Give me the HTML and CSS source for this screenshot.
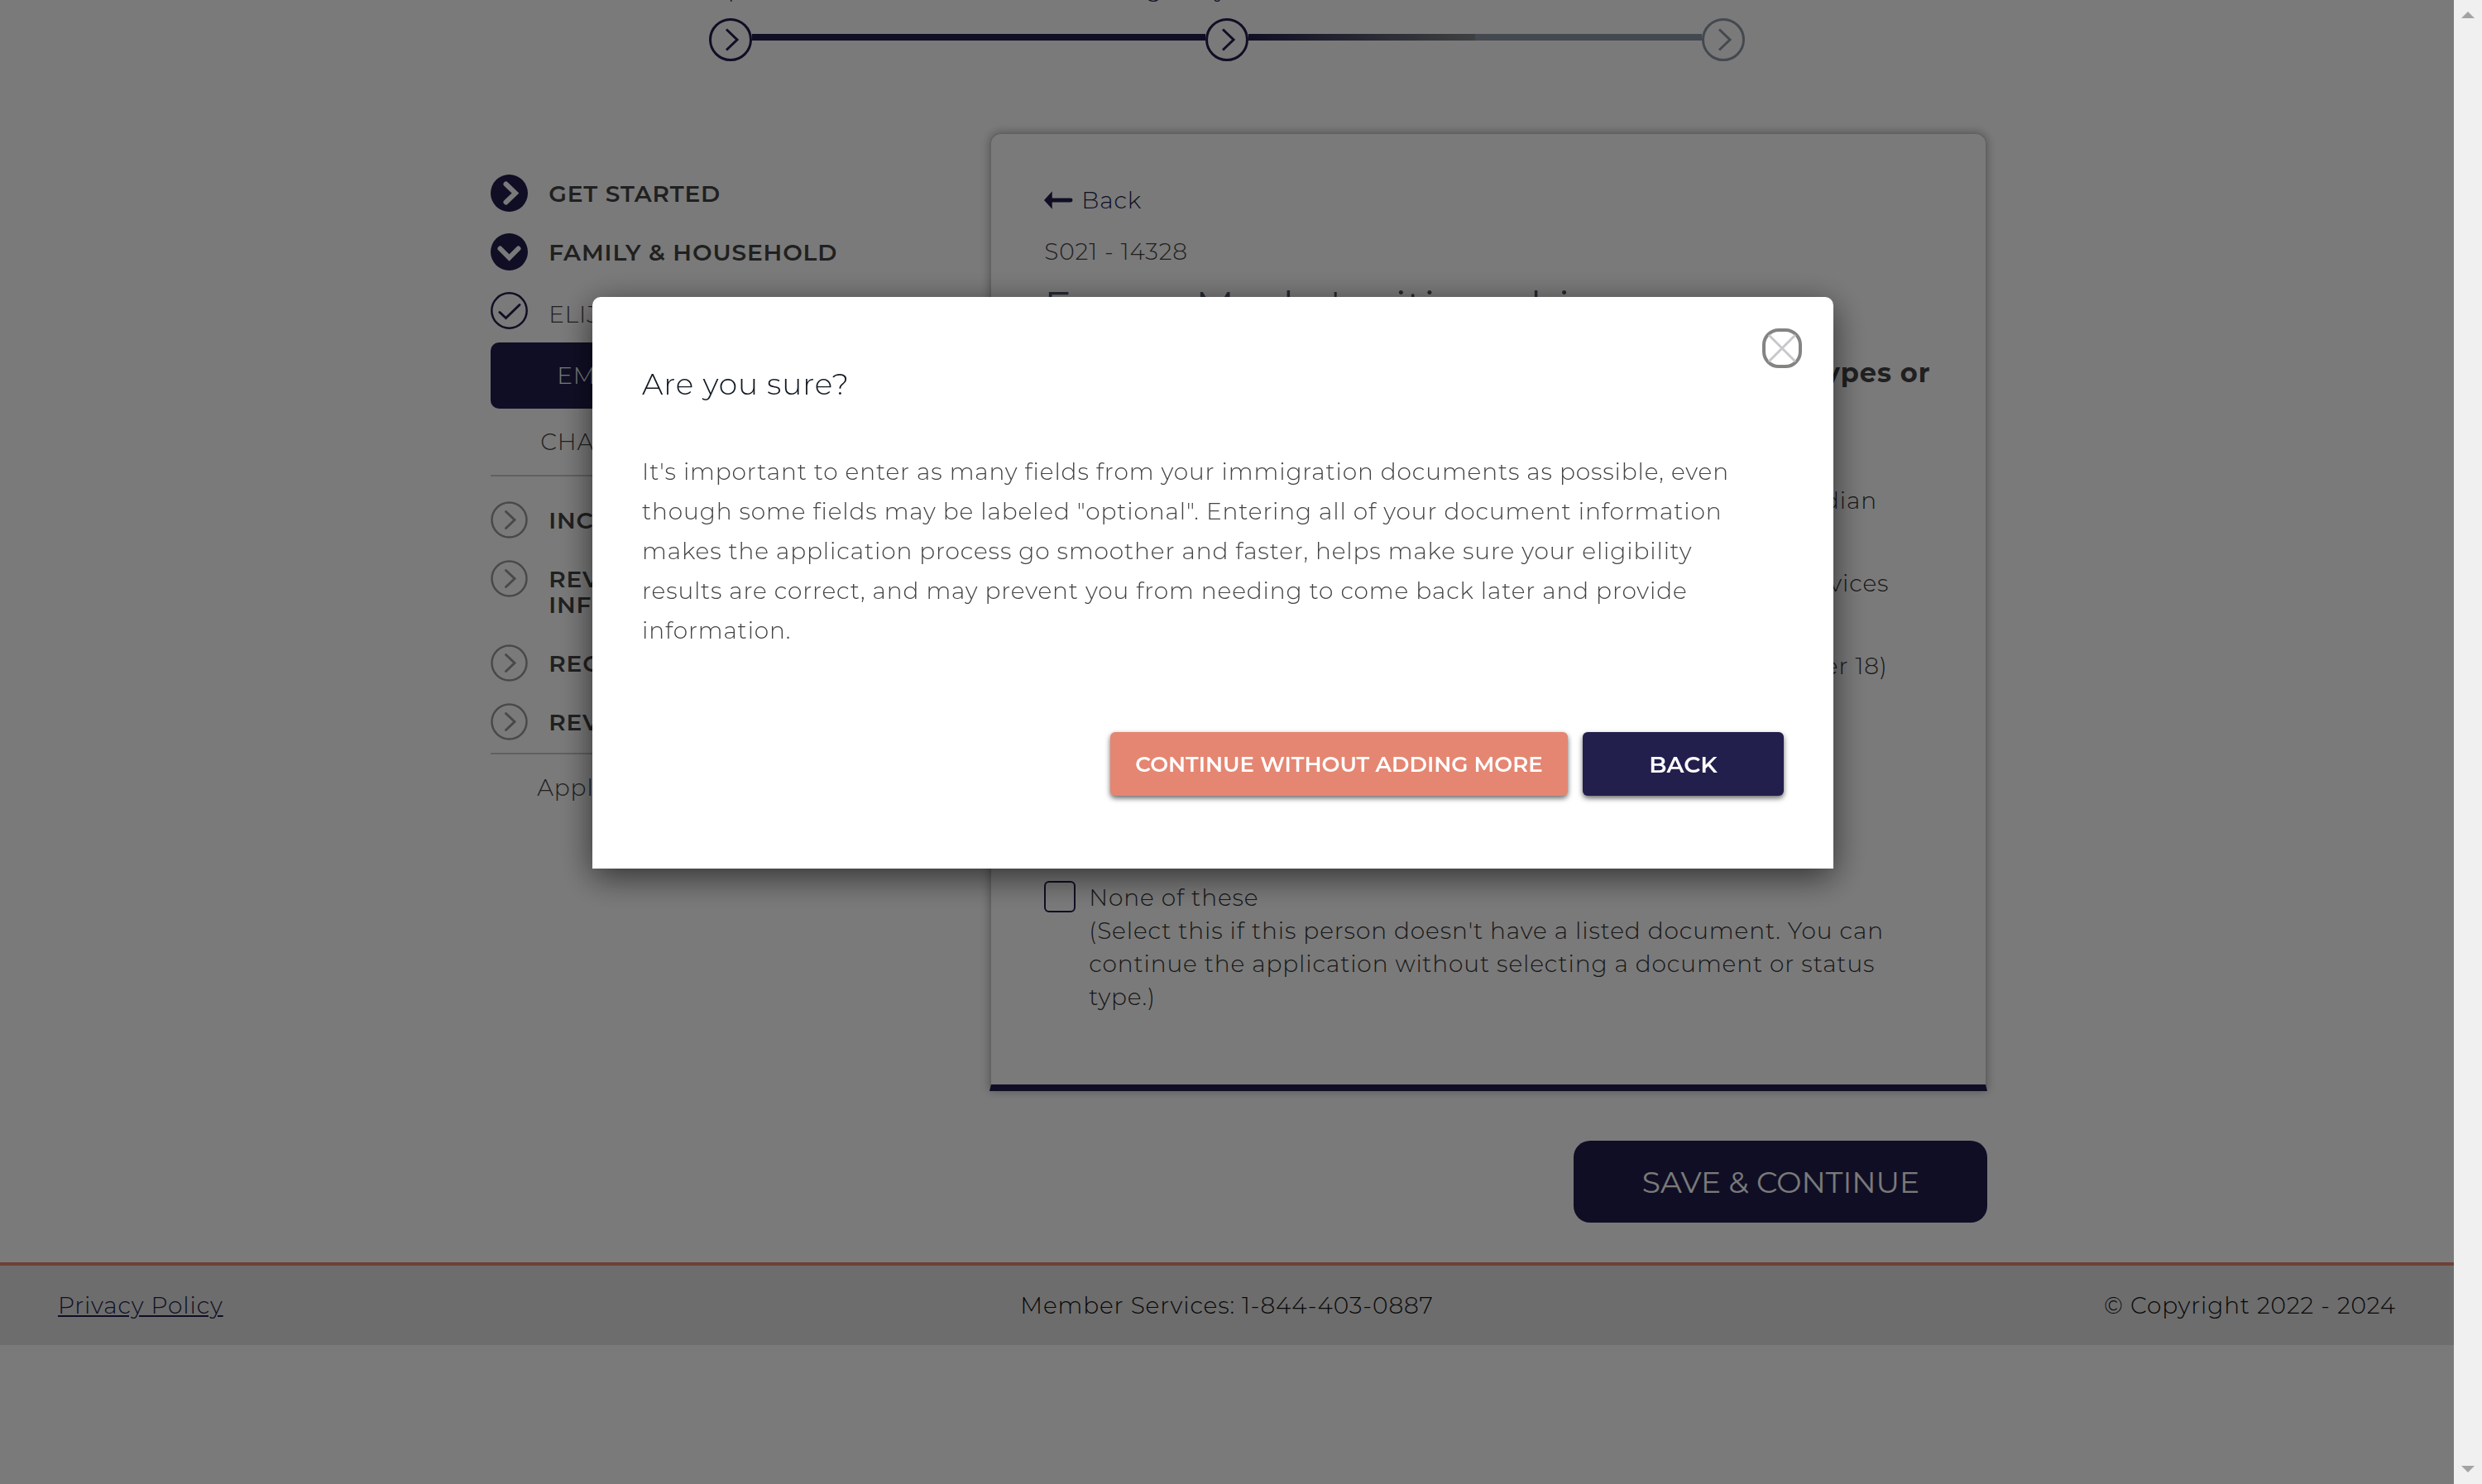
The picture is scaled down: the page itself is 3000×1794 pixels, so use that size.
FILE: index.html
```html
<!DOCTYPE html>
<html lang="en">
<head>
<meta charset="utf-8">
<title>Application</title>
<link rel="stylesheet" href="styles.css">
</head>
<body>
<svg class="sprite" aria-hidden="true">
  <symbol id="ring-next" viewBox="0 0 52 52"><circle cx="26" cy="26" r="24.500" fill="none" stroke="currentColor" stroke-width="3"/><path d="M21 13.500 34 26 21 38.500" fill="none" stroke="currentColor" stroke-width="3"/></symbol>
  <symbol id="ring-todo" viewBox="0 0 45 45"><circle cx="22.500" cy="22.500" r="21" fill="none" stroke="currentColor" stroke-width="2.500"/><path d="M18.500 12.500 29 22.500 18.500 32.500" fill="none" stroke="currentColor" stroke-width="3" stroke-linecap="round"/></symbol>
  <symbol id="disc-next" viewBox="0 0 45 45"><circle cx="22.500" cy="22.500" r="22.500" fill="currentColor"/><path d="M18.500 11.500 30 22.500 18.500 33.500" fill="none" stroke="#fff" stroke-width="6" stroke-linecap="round"/></symbol>
  <symbol id="disc-open" viewBox="0 0 45 45"><circle cx="22.500" cy="22.500" r="22.500" fill="currentColor"/><path d="M11.500 18.500 22.500 29.500 33.500 18.500" fill="none" stroke="#fff" stroke-width="6" stroke-linecap="round"/></symbol>
  <symbol id="ring-done" viewBox="0 0 45 45"><circle cx="22.500" cy="22.500" r="21.200" fill="none" stroke="currentColor" stroke-width="2.500"/><path d="M11 24.500 18.500 31.500 35 15.500" fill="none" stroke="currentColor" stroke-width="3" stroke-linecap="round"/></symbol>
</svg>
<div class="window">
  <div class="page">
    <ol class="steps">
      <li class="step"><span>Complete</span><svg class="step-icon"><use href="#ring-next"/></svg></li>
      <li class="step"><span>Eligibility &amp; results</span><svg class="step-icon"><use href="#ring-next"/></svg></li>
      <li class="step step-later"><span>Enroll</span><svg class="step-icon"><use href="#ring-next"/></svg></li>
    </ol>
    <main class="layout">
      <nav class="side">
        <a class="side-row" href="#"><svg class="side-icon"><use href="#disc-next"/></svg><span>GET STARTED</span></a>
        <a class="side-row" href="#"><svg class="side-icon"><use href="#disc-open"/></svg><span>FAMILY &amp; HOUSEHOLD</span></a>
        <a class="side-row side-person" href="#"><svg class="side-icon"><use href="#ring-done"/></svg><span>ELIJAH</span></a>
        <a class="side-current" href="#">EMMA</a>
        <a class="side-sub" href="#">CHARLES</a>
        <hr>
        <div class="side-group">
          <a class="side-row todo" href="#"><svg class="side-icon"><use href="#ring-todo"/></svg><span>INCOME</span></a>
          <a class="side-row todo" href="#"><svg class="side-icon"><use href="#ring-todo"/></svg><span>REVIEW<br>INFORMATION</span></a>
          <a class="side-row todo" href="#"><svg class="side-icon"><use href="#ring-todo"/></svg><span>RECORDS</span></a>
          <a class="side-row todo" href="#"><svg class="side-icon"><use href="#ring-todo"/></svg><span>REVIEW</span></a>
        </div>
        <hr>
        <p class="side-id">Application ID</p>
      </nav>
      <div class="content">
        <section class="card">
          <a class="back" href="#"><svg class="back-arrow" viewBox="0 0 36 22"><path d="M0 11 10 0v8.500h23a2.500 2.500 0 0 1 0 5H10V22z" fill="currentColor"/></svg>Back</a>
          <p class="code">S021 - 14328</p>
          <h1>Emma Macke's citizenship</h1>
          <form class="form">
            <p class="question">Does Emma have any one of these stated document types or<br>statuses?</p>
            <label class="option"><input type="checkbox"><span>Document: indicating a member of a federally recognized Indian<br>tribe or American Indian born in Canada</span></label>
            <label class="option"><input type="checkbox"><span>Certification from U.S. Department of Health and Human Services<br>(HHS) Office of Refugee Resettlement (ORR)</span></label>
            <label class="option"><input type="checkbox"><span>Office of Refugee Resettlement (ORR) eligibility letter (if under 18)</span></label>
            <label class="option"><input type="checkbox"><span>Cuban/Haitian Entrant</span></label>
            <label class="option"><input type="checkbox"><span>Resident of American Samoa</span></label>
            <label class="option"><input type="checkbox"><span>Battered spouse, child, or parent under the<br>Violence Against Women Act</span></label>
            <label class="option"><input type="checkbox"><span>None of these<br>(Select this if this person doesn't have a listed document. You can<br>continue the application without selecting a document or status<br>type.)</span></label>
          </form>
        </section>
        <button class="save" type="button">SAVE &amp; CONTINUE</button>
      </div>
    </main>
    <footer class="footer">
      <a href="#">Privacy Policy</a>
      <span>Member Services: 1-844-403-0887</span>
      <span>© Copyright 2022 - 2024</span>
    </footer>
  </div>
  <div class="scrollbar" aria-hidden="true">
    <svg viewBox="0 0 16 8"><path d="M0 8 8 0l8 8z" fill="currentColor"/></svg>
    <svg viewBox="0 0 16 8"><path d="M0 0h16L8 8z" fill="currentColor"/></svg>
  </div>
</div>
<div class="overlay">
  <div class="modal" role="dialog" aria-modal="true" aria-labelledby="modal-title">
    <button class="close" type="button" aria-label="Close"><svg viewBox="0 0 40 40"><path d="M4 4l32 32M36 4 4 36" fill="none" stroke="#c6c8cb" stroke-width="3"/></svg></button>
    <h2 id="modal-title">Are you sure?</h2>
    <p>It's important to enter as many fields from your immigration documents as possible, even though some fields may be labeled "optional". Entering all of your document information makes the application process go smoother and faster, helps make sure your eligibility results are correct, and may prevent you from needing to come back later and provide information.</p>
    <div class="actions">
      <button class="btn btn-continue" type="button">CONTINUE WITHOUT ADDING MORE</button>
      <button class="btn btn-back" type="button">BACK</button>
    </div>
  </div>
</div>
</body>
</html>
```
FILE: styles.css
```css
:root {
  --navy: #221f4d;
  --coral: #e58672;
  --text: #444;
}

* { box-sizing: border-box; }

html, body { height: 100%; }

body {
  margin: 0;
  overflow: hidden;
  background: #fff;
  color: var(--text);
  font-family: "Montserrat", "Inter", sans-serif;
  font-size: 28px;
  font-weight: 300;
  line-height: 40px;
  letter-spacing: 0.032em;
}

h1, h2, p, ol { margin: 0; padding: 0; }
a { color: var(--navy); }
button { font-family: inherit; cursor: pointer; border: 0; }
.sprite { display: none; }

.window { display: flex; height: 100vh; }
.page { flex: 1; min-width: 0; }

.scrollbar {
  display: flex;
  flex-direction: column;
  justify-content: space-between;
  align-items: center;
  width: 34px;
  padding: 14px 0;
  background: #f0f0f0;
  color: #a3a3a3;
}
.scrollbar svg { width: 16px; height: 8px; }

/* Progress steps; the page is scrolled so the labels sit above the fold */
.steps {
  display: grid;
  grid-template-columns: repeat(3, 600px);
  justify-content: center;
  margin-top: -34px;
  list-style: none;
}
.step {
  display: grid;
  grid-template-columns: 1fr 52px 1fr;
  align-items: center;
  row-gap: 16px;
  color: var(--navy);
}
.step span { grid-column: 1 / -1; text-align: center; }
.step-icon { grid-column: 2; width: 52px; height: 52px; }
.step::before, .step::after { content: ""; height: 8px; margin-bottom: 6px; background: var(--navy); grid-row: 2; }
.step::before { grid-column: 1; }
.step::after { grid-column: 3; }
.step:first-child::before, .step:last-child::after { visibility: hidden; }
.step:nth-child(2)::after { background: linear-gradient(90deg, var(--navy), #828787); }
.step-later { color: #8f99a6; }
.step-later::before { background: #8f99a6; }

.layout {
  display: grid;
  grid-template-columns: minmax(0, 1fr) minmax(0, 2fr);
  padding: 86px 19% 48px 20%;
}

.side { padding-top: 38px; }
.side a { text-decoration: none; }
.side hr { height: 2px; margin: 0; border: 0; background: #c9c9c9; }
.side-row {
  display: flex;
  align-items: flex-start;
  gap: 25px;
  padding: 13px 0;
  font-weight: 600;
  line-height: 31px;
}
.side-row span { padding: 8px 0 6px; }
.side a.side-row { color: var(--text); }
.side-icon { width: 45px; height: 45px; color: var(--navy); }
.todo .side-icon { color: #999; }
.side-person { font-weight: 300; padding-bottom: 16px; }
.side-person span { padding: 12px 0 2px; }
.side-current {
  display: block;
  padding: 20px 80px;
  border-radius: 10px;
  background: var(--navy);
}
.side a.side-current { color: #fff; }
.side-sub { display: block; padding: 20px 60px; }
.side a.side-sub { color: var(--text); }
.side-group { padding: 17px 0 2px; }
.side-id { padding: 20px 56px; }

.content { display: flex; flex-direction: column; align-items: flex-end; }
.card {
  width: 100%;
  padding: 60px 64px 86px;
  border: 2px solid #d0d0d0;
  border-bottom: 8px solid var(--navy);
  border-radius: 14px 14px 0 0;
  box-shadow: 0 0 12px rgba(0, 0, 0, .3);
}
.back { display: flex; align-items: center; gap: 10px; text-decoration: none; }
.back-arrow { width: 35px; height: 22px; }
.code { margin-top: 22px; }
h1 { margin-top: 18px; font-size: 49px; font-weight: 400; line-height: 56px; color: #4d5866; white-space: nowrap; }
.form { display: flex; flex-direction: column; gap: 20px; padding-top: 30px; }
.question { padding-bottom: 45px; font-size: 32px; font-weight: 700; line-height: 46px; white-space: nowrap; }
.option { display: flex; gap: 16px; color: #333; white-space: nowrap; }
.option input {
  flex: none;
  appearance: none;
  width: 38px;
  height: 38px;
  margin: 0;
  border: 2px solid var(--navy);
  border-radius: 6px;
}
.save {
  width: 500px;
  height: 99px;
  margin-top: 60px;
  border-radius: 20px;
  background: var(--navy);
  color: #fff;
  font-size: 36px;
  font-weight: 400;
}

.footer {
  display: grid;
  grid-template-columns: 1fr auto 1fr;
  padding: 28px 70px;
  border-top: 4px solid var(--coral);
  background: #e3e3e3;
  color: #111;
}
.footer a { justify-self: start; text-underline-offset: 2px; text-decoration-thickness: 2px; }
.footer span:last-child { text-align: right; }

.overlay {
  position: fixed;
  inset: 0 34px 0 0;
  padding: 359px 34px 0 0;
  background: rgba(0, 0, 0, .52);
}
.modal {
  position: relative;
  max-width: 1500px;
  margin: 0 auto;
  padding: 75px 60px 88px;
  border-radius: 10px 10px 0 0;
  background: #fff;
  box-shadow: 0 10px 40px rgba(0, 0, 0, .6);
}
.modal h2 { font-size: 36px; font-weight: 300; line-height: 60px; color: #101820; }
.modal p { margin-top: 52px; padding-right: 40px; line-height: 48px; }
.close {
  position: absolute;
  top: 38px;
  right: 38px;
  width: 48px;
  height: 48px;
  padding: 0;
  border: 4px solid #848484;
  border-radius: 20px;
  background: none;
}
.close svg { display: block; width: 40px; height: 40px; }
.actions { display: flex; justify-content: flex-end; gap: 18px; padding-top: 99px; }
.btn {
  height: 77px;
  border-radius: 6px;
  box-shadow: 0 3px 6px rgba(0, 0, 0, .6);
  color: #fff;
  font-size: 26px;
  font-weight: 600;
}
.btn-continue { width: 553px; background: var(--coral); }
.btn-back { width: 243px; background: var(--navy); font-size: 28px; }
```
